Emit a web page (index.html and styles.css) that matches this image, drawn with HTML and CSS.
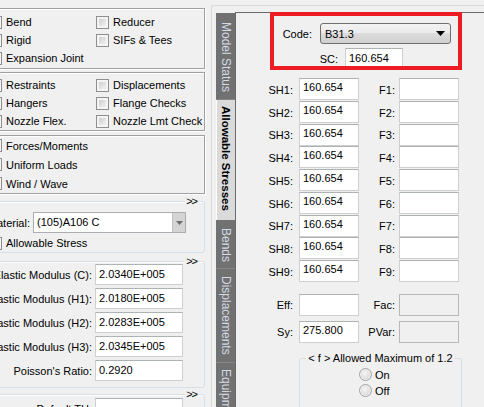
FILE: index.html
```html
<!DOCTYPE html>
<html>
<head>
<meta charset="utf-8">
<link rel="stylesheet" href="styles.css">
</head>
<body>
<div class="app">
  <aside class="left">
    <div class="left-inner">
      <div class="grp etched g1">
        <div class="cbgrid">
          <div class="cb"><span class="box"></span>Bend</div>
          <div class="cb"><span class="box"></span>Reducer</div>
          <div class="cb"><span class="box"></span>Rigid</div>
          <div class="cb"><span class="box"></span>SIFs &amp; Tees</div>
          <div class="cb"><span class="box"></span>Expansion Joint</div>
        </div>
      </div>
      <div class="grp etched g2">
        <div class="cbgrid">
          <div class="cb"><span class="box"></span>Restraints</div>
          <div class="cb"><span class="box"></span>Displacements</div>
          <div class="cb"><span class="box"></span>Hangers</div>
          <div class="cb"><span class="box"></span>Flange Checks</div>
          <div class="cb"><span class="box"></span>Nozzle Flex.</div>
          <div class="cb"><span class="box"></span>Nozzle Lmt Check</div>
        </div>
      </div>
      <div class="grp etched g3">
        <div class="cblist">
          <div class="cb"><span class="box"></span>Forces/Moments</div>
          <div class="cb"><span class="box"></span>Uniform Loads</div>
          <div class="cb"><span class="box"></span>Wind / Wave</div>
        </div>
      </div>
      <div class="grp soft g4">
        <span class="more">&gt;&gt;</span>
        <div class="matrow">
          <span class="l">Material:</span>
          <div class="combo-mat"><span class="val">(105)A106 C</span><span class="dd"><svg width="7" height="4" viewBox="0 0 7 4"><path d="M0 0h7L3.5 4z" fill="#6d6d6d"/></svg></span></div>
        </div>
        <div class="cb single"><span class="box"></span>Allowable Stress</div>
      </div>
      <div class="grp soft g5">
        <span class="more">&gt;&gt;</span>
        <div class="props">
          <span class="l">Elastic Modulus (C):</span><span class="inp">2.0340E+005</span>
          <span class="l">Elastic Modulus (H1):</span><span class="inp">2.0180E+005</span>
          <span class="l">Elastic Modulus (H2):</span><span class="inp">2.0283E+005</span>
          <span class="l">Elastic Modulus (H3):</span><span class="inp">2.0345E+005</span>
          <span class="l">Poisson's Ratio:</span><span class="inp">0.2920</span>
        </div>
      </div>
      <div class="grp soft g6">
        <span class="more">&gt;&gt;</span>
        <div class="props">
          <span class="l">Default TH:</span><span class="inp"></span>
        </div>
      </div>
    </div>
  </aside>
  <div class="tabctl">
    <nav class="tabs">
      <div class="tab t1">Model Status</div>
      <div class="tab sel">Allowable Stresses</div>
      <div class="tab t3">Bends</div>
      <div class="tab t4">Displacements</div>
      <div class="tab t5">Equipment</div>
    </nav>
    <main class="panel">
      <div class="hilite"></div>
      <div class="coderow">
        <span class="l">Code:</span>
        <div class="combo-code"><span class="val">B31.3</span><svg width="9" height="5" viewBox="0 0 9 5"><path d="M0 0h9L4.5 5z" fill="#000"/></svg></div>
      </div>
      <div class="scrow">
        <span class="l">SC:</span>
        <span class="inp sc">160.654</span>
      </div>
      <div class="fields">
        <span class="l">SH1:</span><span class="inp">160.654</span><span class="l l2">F1:</span><span class="inp"></span>
        <span class="l">SH2:</span><span class="inp">160.654</span><span class="l l2">F2:</span><span class="inp"></span>
        <span class="l">SH3:</span><span class="inp">160.654</span><span class="l l2">F3:</span><span class="inp"></span>
        <span class="l">SH4:</span><span class="inp">160.654</span><span class="l l2">F4:</span><span class="inp"></span>
        <span class="l">SH5:</span><span class="inp">160.654</span><span class="l l2">F5:</span><span class="inp"></span>
        <span class="l">SH6:</span><span class="inp">160.654</span><span class="l l2">F6:</span><span class="inp"></span>
        <span class="l">SH7:</span><span class="inp">160.654</span><span class="l l2">F7:</span><span class="inp"></span>
        <span class="l">SH8:</span><span class="inp">160.654</span><span class="l l2">F8:</span><span class="inp"></span>
        <span class="l">SH9:</span><span class="inp">160.654</span><span class="l l2">F9:</span><span class="inp"></span>
      </div>
      <div class="fields extra">
        <span class="l">Eff:</span><span class="inp"></span><span class="l l2">Fac:</span><span class="inp dis"></span>
        <span class="l">Sy:</span><span class="inp">275.800</span><span class="l l2">PVar:</span><span class="inp dis"></span>
      </div>
      <fieldset class="fgrp">
        <legend>&lt; f &gt; Allowed Maximum of 1.2</legend>
        <div class="radios">
          <div class="rb"><span class="radio"></span>On</div>
          <div class="rb"><span class="radio"></span>Off</div>
        </div>
      </fieldset>
    </main>
  </div>
</div>
</body>
</html>
```
FILE: styles.css
```css
* { box-sizing: border-box; }
html, body { margin: 0; padding: 0; }
body {
  width: 484px;
  height: 407px;
  overflow: hidden;
  background: #f0f0f0;
  font-family: "Liberation Sans", Arial, sans-serif;
  font-size: 11px;
  color: #000;
}
.app { display: flex; height: 407px; }

/* ---------- left panel ---------- */
.left { width: 211px; flex: none; overflow: hidden; }
.left-inner { margin-left: -20px; width: 225px; }
.grp { position: relative; }
.etched {
  border: 1px solid #a0a0a0;
  box-shadow: inset 1px 1px 0 #fff, 1px 1px 0 #fff;
}
.soft {
  border: 1px solid #d5dfe5;
  border-radius: 3px;
  box-shadow: inset 1px 1px 0 #fff;
}
.g1 { margin-top: 8px; padding: 4px 0 1px 8px; }
.g2 { margin-top: 3px; padding: 3px 0 0 8px; }
.g3 { margin-top: 4px; padding: 0 0 0 8px; }
.g4 { margin-top: 7px; padding: 10px 0 0 0; height: 52px; }
.g5 { margin-top: 8px; padding: 2px 0 6px 0; }
.g6 { margin-top: 6px; padding: 3px 0 6px 0; }

.cbgrid { display: grid; grid-template-columns: 107px auto; grid-auto-rows: 18px; }
.cblist { display: grid; grid-auto-rows: 19px; }
.cb { display: flex; align-items: center; gap: 4px; white-space: nowrap; }
.cb.single { height: 18px; margin-top: 1px; padding-left: 8px; }
.box {
  flex: none;
  width: 13px;
  height: 13px;
  border: 1px solid #8f8f8f;
  background: linear-gradient(135deg, #c4c4c4 0%, #e6e6e6 60%, #f7f7f7 100%);
  box-shadow: inset 0 0 0 2px #f4f4f4;
}
.more {
  position: absolute;
  top: -7px;
  right: 6px;
  background: #f0f0f0;
  padding: 0 1px;
  line-height: 13px;
  letter-spacing: -1px;
}
.matrow { display: grid; grid-template-columns: 49px 153px; column-gap: 3px; height: 21px; }
.matrow .l { text-align: right; align-self: center; white-space: nowrap; }
.combo-mat {
  display: flex;
  border: 1px solid #abadb3;
  background: #fff;
}
.combo-mat .val { flex: 1; padding-left: 3px; line-height: 19px; }
.combo-mat .dd {
  width: 13px;
  background: #d4d4d4;
  border-left: 1px solid #c0c0c0;
  display: flex;
  align-items: center;
  justify-content: center;
}
.props {
  display: grid;
  grid-template-columns: 111px 88px;
  column-gap: 3px;
  row-gap: 3px;
  grid-auto-rows: 21px;
}
.props .l { text-align: right; align-self: center; white-space: nowrap; }

/* ---------- inputs ---------- */
.inp {
  display: block;
  height: 22px;
  border: 1px solid #cfcfcf;
  border-top-color: #adb2b5;
  background: #fff;
  padding: 1px 0 0 3px;
  line-height: 14px;
  white-space: nowrap;
}
.props .inp { height: 21px; padding-top: 2px; }
.inp.dis { background: #f0f0f0; border-color: #b7b7b7; }

/* ---------- tab control ---------- */
.tabctl {
  flex: 1;
  margin-top: 5px;
  border-left: 1px solid #d9d9d9;
  border-top: 1px solid #d9d9d9;
  border-top-left-radius: 3px;
  padding-top: 6px;
  display: flex;
}
.tabs {
  flex: none;
  width: 19px;
  margin-left: 4px;
  margin-top: 1px;
  background: #717171;
  display: flex;
  flex-direction: column;
}
.tab {
  writing-mode: vertical-rl;
  font-size: 12px;
  line-height: 19px;
  color: #d3dae2;
  white-space: nowrap;
  border-bottom: 1px solid #858585;
}
.t1 { padding: 9px 0 7px; }
.sel {
  font-size: 11.5px;
  padding: 6px 0 9px;
  background: #dadada;
  color: #000;
  font-weight: bold;
  border-left: 1px solid #fff;
  border-bottom: none;
}
.t3 { padding: 8px 0 6px; }
.t4 { padding: 7px 0 7px; }
.t5 { padding: 6px 0; border-bottom: none; }

.panel {
  flex: 1;
  position: relative;
  border-left: 1px solid #6a6a6a;
  border-top: 1px solid #6a6a6a;
}
.hilite {
  position: absolute;
  left: 34px;
  top: -1px;
  width: 192px;
  height: 58px;
  border: 4px solid #ed1c24;
}
.coderow {
  display: flex;
  align-items: center;
  gap: 8px;
  margin: 10px 0 0 34px;
}
.coderow .l { width: 42px; text-align: right; }
.combo-code {
  width: 131px;
  height: 21px;
  border: 1px solid #707070;
  border-radius: 3px;
  background: linear-gradient(#f2f2f2 0%, #ebebeb 45%, #dddddd 50%, #cfcfcf 100%);
  display: flex;
  align-items: center;
  justify-content: space-between;
  padding: 0 5px 0 4px;
}
.scrow {
  display: flex;
  align-items: center;
  gap: 7px;
  margin: 4px 0 0 34px;
}
.scrow .l { width: 68px; text-align: right; }
.inp.sc { width: 58px; height: 21px; padding-top: 2px; }

.fields {
  display: grid;
  grid-template-columns: 39px 60px 40px 60px;
  grid-auto-rows: 22.75px;
  margin: 9px 0 0 24px;
}
.fields .l { text-align: right; padding-right: 6px; align-self: center; padding-top: 1px; }
.fields .l2 { padding-right: 4px; }
.fields.extra { margin-top: 11px; grid-auto-rows: 22px; row-gap: 5px; }

.fgrp {
  margin: 9px 0 0 63px;
  width: 163px;
  padding: 0;
  border: 1px solid #d5dfe5;
  border-radius: 3px;
  height: 70px;
}
.fgrp legend {
  margin: 0 auto;
  padding: 0 2px;
  line-height: 13px;
}
.radios { padding: 2px 0 0 59px; }
.rb { display: flex; align-items: center; gap: 3px; height: 16px; }
.radio {
  flex: none;
  width: 13px;
  height: 13px;
  border-radius: 50%;
  border: 1px solid #a3a3a3;
  background: radial-gradient(circle at 45% 40%, #f6f6f6 0%, #e2e2e2 45%, #c9c9c9 100%);
  box-shadow: inset 0 0 0 1px #f2f2f2;
}
```
